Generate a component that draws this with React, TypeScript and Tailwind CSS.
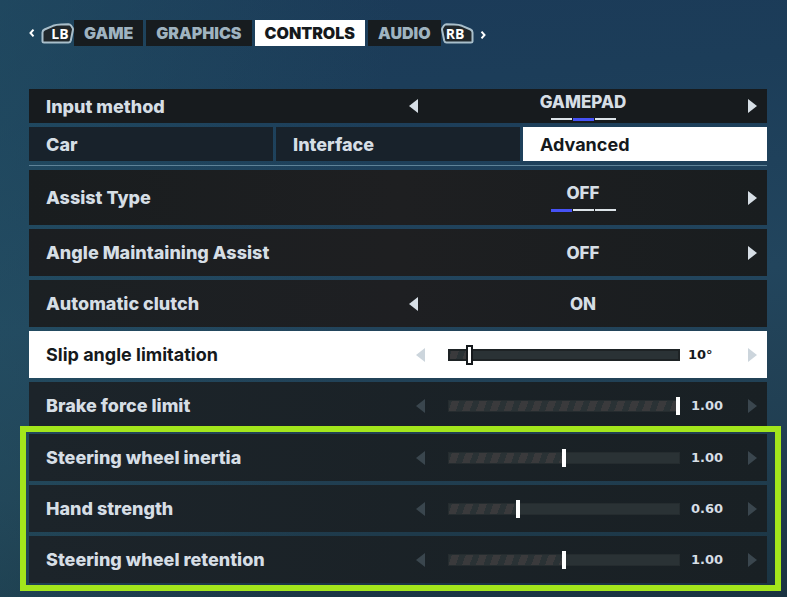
import type { CSSProperties, ReactNode } from "react"
import clsx from "clsx"

const sections = ["GAME", "GRAPHICS", "CONTROLS", "AUDIO"]
const pages = ["Car", "Interface", "Advanced"]

const sliders = [
	{ id: "slip", name: "Slip angle limitation", value: "10°", percent: 8, active: true },
	{ id: "brake", name: "Brake force limit", value: "1.00", percent: 100 },
]

const wheelSliders = [
	{ id: "inertia", name: "Steering wheel inertia", value: "1.00", percent: 50 },
	{ id: "hand", name: "Hand strength", value: "0.60", percent: 30 },
	{ id: "retention", name: "Steering wheel retention", value: "1.00", percent: 50 },
]

type SliderProps = { id: string, name: string, value: string, percent: number, active?: boolean }

const Arrow = ({ side, label, className }: { side: "left" | "right", label: string, className?: string }) => (
	<button type="button" aria-label={label} className={clsx("shrink-0", className)}>
		<svg width="9" height="14" viewBox="0 0 9 14" fill="currentColor" className="block">
			<path d={side == "left" ? "M9 0v14L0 7z" : "M0 0v14l9-7z"} />
		</svg>
	</button>
)

const Chevron = ({ side }: { side: "left" | "right" }) => (
	<button type="button" aria-label={side == "left" ? "Previous section" : "Next section"} className="text-white">
		<svg width="6" height="8" viewBox="0 0 6 8" fill="none" stroke="currentColor" strokeWidth="2" className="block">
			<path d={side == "left" ? "M4.5 .7 1.5 4l3 3.3" : "M1.5 .7l3 3.3-3 3.3"} />
		</svg>
	</button>
)

const Bumper = ({ name }: { name: "LB" | "RB" }) => (
	<svg width="33" height="21" viewBox="0 0 33 21" className="block shrink-0">
		<path
			d="M1.500 18.500V9.500Q1.500 7.500 3.500 6.500L12 2.800Q15 1.600 20 1.500L27.500 1.200Q29 1.200 30 2.500L31.600 5Q32.200 6 31.800 7.500L29.800 17.500Q29.300 19.500 27.500 19.500H3Q1.500 19.500 1.500 18.500Z"
			transform={name == "RB" ? "matrix(-1 0 0 1 33 0)" : undefined}
			fill="#20272b"
			stroke="#a9bfcb"
			strokeWidth="2"
		/>
		<text x={name == "LB" ? 19 : 14} y="16" textAnchor="middle" fill="#fff" className="font-['Open_Sans',sans-serif] text-[14px] font-bold">{name}</text>
	</svg>
)

const Row = ({ children, className }: { children: ReactNode, className?: string }) => (
	<div className={clsx("flex items-center justify-between pl-[17px] pr-[10px]", className)}>{children}</div>
)

const Choice = ({ name, value, steps, current, prev, last, className }: {
	name: string, value: string, steps?: number, current?: number, prev?: boolean, last?: boolean, className: string
}) => (
	<Row className={className}>
		<span>{name}</span>
		<div className="flex w-[348px] items-center justify-between">
			<Arrow side="left" label={`Previous ${name}`} className={prev ? "" : "invisible"} />
			<div className="flex flex-col items-center gap-[6px]">
				<output aria-label={name} className="text-[17px] leading-5">{value}</output>
				{steps && (
					<div className="flex h-[3px] items-start gap-px">
						{Array.from({ length: steps }, (_, index) => (
							<i key={index} className={index == current ? "h-[3px] w-[21px] bg-[#4652f5]" : "h-[2px] w-[21px] bg-[#dce3e8]"} />
						))}
					</div>
				)}
			</div>
			<Arrow side="right" label={`Next ${name}`} className={last ? "invisible" : ""} />
		</div>
	</Row>
)

const Slider = ({ id, name, value, percent, active }: SliderProps) => (
	<Row className={clsx("h-[47px]", active ? "bg-white text-[#15191c]" : "bg-linear-to-r from-[#1c242a] to-[#192024]")}>
		<label htmlFor={id} className={active ? "font-bold" : ""}>{name}</label>
		<div className="flex w-[348px] items-center pl-[7px]">
			<Arrow side="left" label={`Decrease ${name}`} className={active ? "text-[#ccd5dc]" : "text-[#3a464e]"} />
			<input
				id={id}
				type="range"
				min={0}
				max={100}
				defaultValue={percent}
				style={{ "--fill": `${percent}%` } as CSSProperties}
				className={clsx(
					"ml-[23px] h-5 min-w-0 flex-1 appearance-none bg-transparent",
					"[&::-webkit-slider-runnable-track]:h-3 [&::-webkit-slider-runnable-track]:bg-[#2a3235]",
					"[&::-webkit-slider-runnable-track]:bg-[repeating-linear-gradient(110deg,#2a3235_0px,#2a3235_4px,#3a3a3c_4px,#3a3a3c_11px,#2a3235_11px,#2a3235_13px)]",
					"[&::-webkit-slider-runnable-track]:bg-no-repeat [&::-webkit-slider-runnable-track]:[background-size:var(--fill)_100%]",
					"[&::-webkit-slider-thumb]:appearance-none [&::-webkit-slider-thumb]:bg-white",
					active
						? "[&::-webkit-slider-runnable-track]:shadow-[inset_0_0_0_2px_#1e2325] [&::-webkit-slider-thumb]:-mt-1 [&::-webkit-slider-thumb]:h-5 [&::-webkit-slider-thumb]:w-[7px] [&::-webkit-slider-thumb]:border-2 [&::-webkit-slider-thumb]:border-[#15191c]"
						: "[&::-webkit-slider-runnable-track]:shadow-[inset_0_0_0_1px_#252c2f] [&::-webkit-slider-thumb]:-mt-[3px] [&::-webkit-slider-thumb]:h-[18px] [&::-webkit-slider-thumb]:w-1"
				)}
			/>
			<output htmlFor={id} className={clsx("w-[43px] font-['DejaVu_Sans',sans-serif] text-[13px]", active ? "pl-2" : "text-right")}>{value}</output>
			<Arrow side="right" label={`Increase ${name}`} className={clsx("ml-[25px]", active ? "text-[#ccd5dc]" : "text-[#3a464e]")} />
		</div>
	</Row>
)

const App = () => {
	return (
		<main className="min-h-screen bg-[linear-gradient(100deg,#24546680_0%,transparent_45%),linear-gradient(175deg,#1b3a58_0%,#1c3d59_18%,#22455d_50%,#213f52_75%,#1a3341_100%)] pb-[14px] pl-[29px] pr-5 pt-5 font-['Inter',sans-serif] text-[18px] font-extrabold text-[#d6dee5]">
			<nav aria-label="Settings sections" className="flex items-center text-[16px]">
				<Chevron side="left" />
				<div className="ml-[6px]"><Bumper name="LB" /></div>
				<div className="flex gap-[3px] font-black">
					{sections.map((section) => (
						<button
							type="button"
							key={section}
							aria-current={section == "CONTROLS" ? "page" : undefined}
							className={clsx("h-[26px] px-[10px]", section == "CONTROLS" ? "bg-white text-[#15191c]" : "bg-[#171c1f] text-[#9fb3c0]")}
						>
							{section}
						</button>
					))}
				</div>
				<Bumper name="RB" />
				<div className="ml-[6px]"><Chevron side="right" /></div>
			</nav>

			<section className="mt-[43px] flex flex-col gap-1">
				<Choice name="Input method" value="GAMEPAD" steps={3} current={1} prev className="h-[34px] bg-[#171b1e]" />
				<div className="grid grid-cols-3 gap-[3px]">
					{pages.map((page) => (
						<button
							type="button"
							key={page}
							aria-current={page == "Advanced" ? "page" : undefined}
							className={clsx("h-[34px] px-[17px] text-left", page == "Advanced" ? "bg-white font-bold text-[#15191c]" : "bg-[#18222b]")}
						>
							{page}
						</button>
					))}
				</div>
				<hr className="border-[#5f8398]" />
				<Choice name="Assist Type" value="OFF" steps={3} current={0} className="h-[55px] bg-linear-to-r from-[#191d1f] via-[#1e1f21] to-[#191d1f]" />
				<Choice name="Angle Maintaining Assist" value="OFF" className="h-[47px] bg-linear-to-r from-[#1b1e21] via-[#1e1f21] to-[#191d1f]" />
				<Choice name="Automatic clutch" value="ON" prev last className="h-[47px] bg-linear-to-r from-[#1b2023] via-[#1e1f22] to-[#191d1f]" />
				{sliders.map((slider) => <Slider key={slider.id} {...slider} />)}
				<div className="relative mt-px flex flex-col gap-1">
					{wheelSliders.map((slider) => <Slider key={slider.id} {...slider} />)}
					<div className="pointer-events-none absolute -bottom-2 -left-[9px] -right-[14px] -top-2 border-[6px] border-[#a3e61c]" />
				</div>
			</section>
		</main>
	)
}

export default App
